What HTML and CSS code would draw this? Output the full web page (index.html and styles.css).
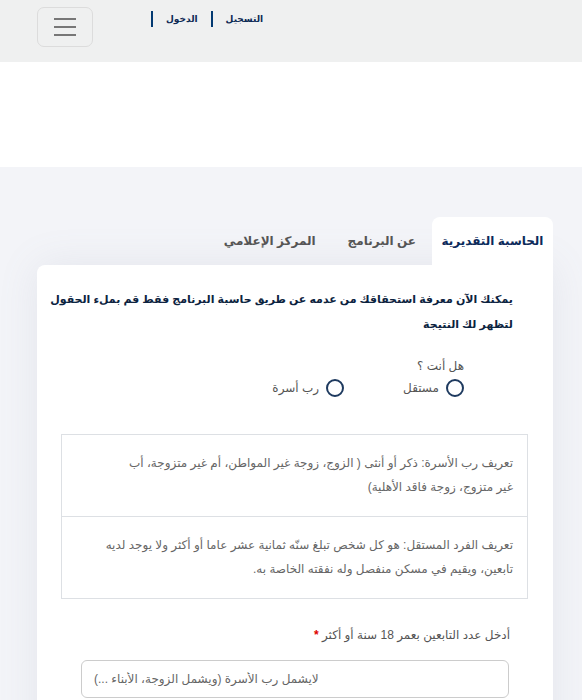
FILE: index.html
```html
<!DOCTYPE html>
<html lang="ar">
<head>
<meta charset="utf-8">
<link rel="stylesheet" href="styles.css">
</head>
<body>
<header class="topbar">
  <button class="menu-btn" aria-label="menu">
    <span></span><span></span><span></span>
  </button>
  <nav class="auth" dir="rtl">
    <a href="#">التسجيل</a>
    <i class="sep"></i>
    <a href="#">الدخول</a>
    <i class="sep"></i>
  </nav>
</header>
<div class="banner"></div>
<main class="main">
  <div class="tabs" dir="rtl">
    <div class="tab active">الحاسبة التقديرية</div>
    <div class="tab">عن البرنامج</div>
    <div class="tab">المركز الإعلامي</div>
  </div>
  <section class="card" dir="rtl">
    <p class="lead">يمكنك الآن معرفة استحقاقك من عدمه عن طريق حاسبة البرنامج فقط قم بملء الحقول لتظهر لك النتيجة</p>
    <div class="question">هل أنت ؟</div>
    <div class="radios">
      <label class="radio"><span class="circle"></span>مستقل</label>
      <label class="radio"><span class="circle"></span>رب أسرة</label>
    </div>
    <div class="info">
      <div class="info-item info-item--narrow">تعريف رب الأسرة: ذكر أو أنثى ( الزوج، زوجة غير المواطن، أم غير متزوجة، أب غير متزوج، زوجة فاقد الأهلية)</div>
      <div class="info-item">تعريف الفرد المستقل: هو كل شخص تبلغ سنّه ثمانية عشر عاما أو أكثر ولا يوجد لديه تابعين، ويقيم في مسكن منفصل وله نفقته الخاصة به.</div>
    </div>
    <div class="field-label">أدخل عدد التابعين بعمر 18 سنة أو أكثر <span class="req">*</span></div>
    <input class="field" type="text" placeholder="لايشمل رب الأسرة (ويشمل الزوجة، الأبناء ...)">
  </section>
</main>
</body>
</html>
```
FILE: styles.css
```css
* { box-sizing: border-box; }
html, body { margin: 0; padding: 0; }
body {
  font-family: Arial, "Liberation Sans", "DejaVu Sans", sans-serif;
  background: #f3f4f8;
  height: 700px;
  overflow: hidden;
}
.topbar {
  height: 62px;
  background: #eff0f0;
  display: flex;
  align-items: flex-start;
  padding: 7px 0 0 37px;
}
.menu-btn {
  width: 56px;
  height: 40px;
  border: 1px solid #dcdcdc;
  border-radius: 7px;
  background: transparent;
  display: flex;
  flex-direction: column;
  justify-content: center;
  align-items: center;
  gap: 6px;
  padding: 0;
}
.menu-btn span {
  display: block;
  width: 22px;
  height: 2px;
  background: #777;
}
.auth {
  display: flex;
  align-items: center;
  margin: 4px 0 0 58px;
}
.auth a {
  font-size: 9px;
  font-weight: bold;
  color: #0d2a55;
  text-decoration: none;
  line-height: 16px;
  margin: 0 13px;
}
.auth a:first-child { margin-right: 0; }
.sep {
  display: block;
  width: 2px;
  height: 16px;
  background: #033a72;
}
.banner {
  height: 105px;
  background: #fff;
}
.main {
  padding: 50px 29px 0 37px;
}
.tabs {
  display: flex;
  height: 48px;
}
.tab {
  font-size: 12px;
  font-weight: bold;
  color: #555;
  line-height: 48px;
  padding: 0 16px;
}
.tab.active {
  width: 121px;
  padding: 0;
  text-align: center;
  background: #fff;
  color: #0c2a5a;
  border-radius: 8px 8px 0 0;
}
.card {
  background: #fff;
  border-radius: 8px 0 0 0;
  padding: 22px 40px 0 20px;
  height: 500px;
  box-shadow: 0 0 40px rgba(120, 130, 160, 0.12);
}
.lead {
  margin: 0 0 0 -14px;
  font-size: 11px;
  font-weight: bold;
  line-height: 25px;
  color: #0c2340;
}
.question {
  margin-top: 19px;
  padding-right: 49px;
  font-size: 12px;
  color: #555;
  line-height: 20px;
}
.radios {
  display: flex;
  gap: 59px;
  padding-right: 49px;
  margin-top: 3px;
}
.radio {
  display: flex;
  align-items: center;
  gap: 7px;
  font-size: 12px;
  color: #555;
}
.circle {
  display: block;
  width: 18px;
  height: 18px;
  border: 2px solid #1e3a5f;
  border-radius: 50%;
}
.info {
  margin: 37px -15px 0 0;
  width: 467px;
  border: 1px solid #dde0e4;
}
.info-item {
  padding: 16px 14px 17px 30px;
  font-size: 12px;
  line-height: 24px;
  color: #666;
}
.info-item--narrow {
  padding-left: 60px;
}
.info-item + .info-item {
  border-top: 1px solid #dde0e4;
}
.field-label {
  margin-top: 26px;
  padding-right: 3px;
  font-size: 12px;
  color: #555;
  line-height: 20px;
}
.req { color: #d00; font-weight: bold; }
.field {
  display: block;
  margin-top: 15px;
  margin-right: 4px;
  width: 428px;
  height: 38px;
  border: 1px solid #ccc;
  border-radius: 6px;
  padding: 0 12px;
  font-family: inherit;
  font-size: 12px;
  text-align: left;
}
.field::placeholder { color: #666; }
```
